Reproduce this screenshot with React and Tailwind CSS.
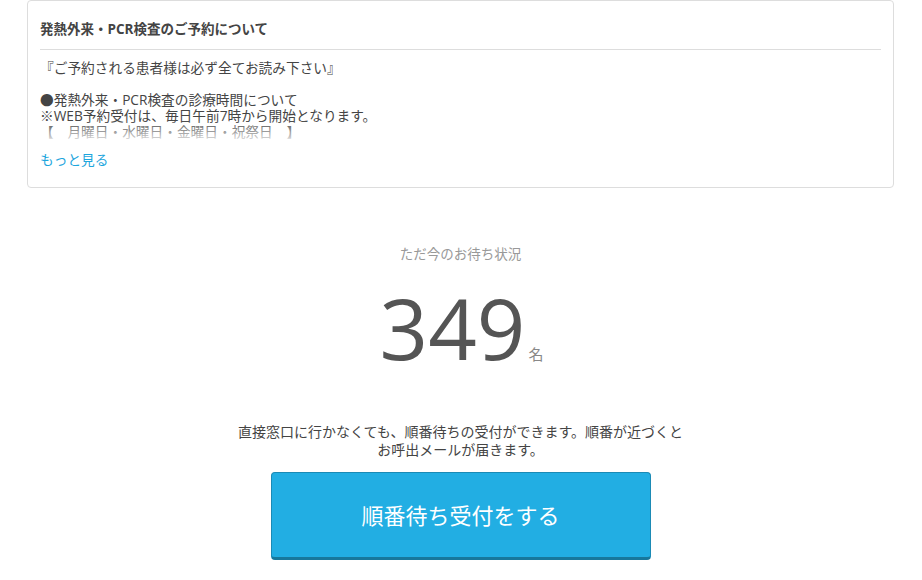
import React from "react";

const FONT = { fontFamily: '"Open Sans", "Noto Sans CJK JP", sans-serif' };

function Notice() {
  return (
    <div className="border border-[#dddddd] rounded-[4px] px-3 bg-white">
      <div className="pt-[19px] pb-[11px] text-[13.5px] leading-[18px] font-bold text-[#444]">
        発熱外来・PCR検査のご予約について
      </div>
      <div className="border-b border-[#dddddd]" />
      <div className="relative pt-[10px] h-[92px] overflow-hidden text-[13.7px] leading-[16px] text-[#444]">
        <p>『ご予約される患者様は必ず全てお読み下さい』</p>
        <p className="h-4" />
        <p>●発熱外来・PCR検査の診療時間について</p>
        <p>※WEB予約受付は、毎日午前7時から開始となります。</p>
        <p>【　月曜日・水曜日・金曜日・祝祭日　】</p>
        <div className="absolute left-0 right-0 bottom-0 h-[22px] bg-gradient-to-b from-white/0 to-white/90" />
      </div>
      <div className="pt-[10px] pb-[19px]">
        <a className="block text-[13.7px] leading-[16px] text-[#1ea6dd]">もっと見る</a>
      </div>
    </div>
  );
}

export default function App() {
  return (
    <div className="bg-white min-h-[580px] pl-[27px] pr-[28px]" style={FONT}>
      <Notice />
      <div className="flex flex-col items-center">
        <div className="mt-[57px] text-[13.5px] leading-[18px] text-[#999]">ただ今のお待ち状況</div>
        <div className="mt-[20px] flex items-baseline text-[#555] pl-[2px]">
          <span className="text-[85px] leading-[88px]">349</span>
          <span className="ml-[3px] text-[15px] text-[#888]">名</span>
        </div>
        <p className="mt-[52px] text-[14px] leading-[18px] text-[#444] text-center">
          直接窓口に行かなくても、順番待ちの受付ができます。順番が近づくと
          <br />
          お呼出メールが届きます。
        </p>
        <button className="mt-[13px] w-[380px] h-[88px] rounded-[4px] bg-[#22aee3] border border-[#1b8ab5] border-b-[3px] border-b-[#17789c] text-white text-[22px] leading-none">
          順番待ち受付をする
        </button>
      </div>
    </div>
  );
}
